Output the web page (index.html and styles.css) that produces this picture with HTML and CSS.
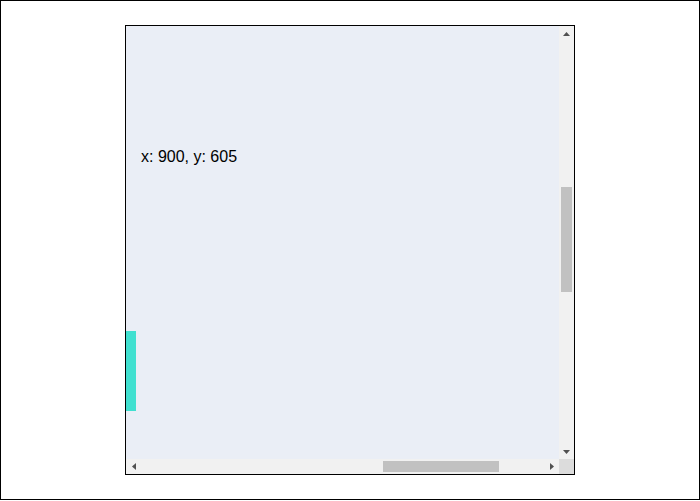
FILE: index.html
```html
<!DOCTYPE html>
<html>
<head>
<meta charset="utf-8">
<link rel="stylesheet" href="styles.css">
</head>
<body>
<div class="frame">
  <div class="scroller">
    <div class="viewport" id="viewport">
      <div class="canvas">
        <div class="label">x: 900, y: 605</div>
        <div class="bar"></div>
      </div>
    </div>
    <div class="vbar">
      <div class="btn"><svg width="7" height="4" viewBox="0 0 7 4"><polygon points="3.5,0 7,4 0,4" fill="#505050"/></svg></div>
      <div class="track"><div class="thumb vthumb"></div></div>
      <div class="btn"><svg width="7" height="4" viewBox="0 0 7 4"><polygon points="0,0 7,0 3.5,4" fill="#505050"/></svg></div>
    </div>
    <div class="hbar">
      <div class="btn"><svg width="4" height="7" viewBox="0 0 4 7"><polygon points="0,3.5 4,0 4,7" fill="#505050"/></svg></div>
      <div class="track"><div class="thumb hthumb"></div></div>
      <div class="btn"><svg width="4" height="7" viewBox="0 0 4 7"><polygon points="0,0 4,3.5 0,7" fill="#505050"/></svg></div>
    </div>
    <div class="corner"></div>
  </div>
</div>
<script src="script.js"></script>
</body>
</html>
```
FILE: styles.css
```css
html, body {
  margin: 0;
  padding: 0;
  background: #ffffff;
}
.frame {
  box-sizing: border-box;
  width: 700px;
  height: 500px;
  border: 1px solid #000000;
  padding: 24px 0 0 124px;
}
.scroller {
  box-sizing: border-box;
  width: 450px;
  height: 450px;
  border: 1px solid #000000;
  display: grid;
  grid-template-columns: 433px 15px;
  grid-template-rows: 433px 15px;
  background: #eaeef6;
}
.viewport {
  overflow: hidden;
  position: relative;
}
.canvas {
  position: relative;
  width: 1500px;
  height: 1650px;
}
.label {
  position: absolute;
  left: 915px;
  top: 727px;
  font-family: "Liberation Sans", Arial, sans-serif;
  font-size: 16px;
  color: #000000;
  white-space: nowrap;
}
.bar {
  position: absolute;
  left: 800px;
  top: 910px;
  width: 110px;
  height: 80px;
  background: #40e0d0;
}
.vbar, .hbar {
  background: #f1f1f1;
  display: flex;
}
.vbar {
  flex-direction: column;
}
.btn {
  flex: 0 0 15px;
  display: flex;
  align-items: center;
  justify-content: center;
}
.btn svg {
  display: block;
}
.track {
  flex: 1;
  display: flex;
}
.vbar .track {
  flex-direction: column;
  padding: 0 2px;
}
.hbar .track {
  padding: 2px 0;
}
.thumb {
  background: #c1c1c1;
}
.vthumb {
  margin-top: 146px;
  height: 105px;
  width: 11px;
}
.hthumb {
  margin-left: 242px;
  width: 116px;
  height: 11px;
}
.corner {
  background: #dcdcdc;
}
```
FILE: script.js
```js
var v = document.getElementById('viewport');
v.scrollLeft = 900;
v.scrollTop = 605;
```
